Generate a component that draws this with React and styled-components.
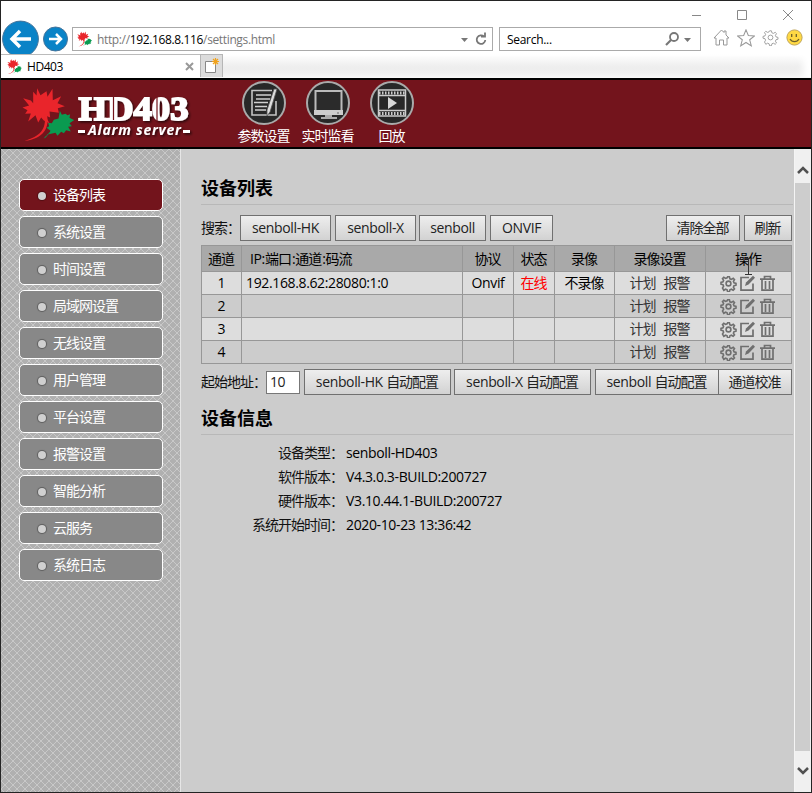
import React from "react";
import styled, { createGlobalStyle } from "styled-components";

const Global = createGlobalStyle`
  * { box-sizing: border-box; }
  html, body { margin: 0; padding: 0; }
  body { overflow: hidden; font: 14px "Open Sans", "Noto Sans CJK SC", sans-serif; color: #111; }
`;

const Window = styled.div`
  width: 812px; height: 793px; display: flex; flex-direction: column;
  border: 1px solid #242424; background: #fff; position: relative;
`;
const TitleBar = styled.div`
  height: 25px; display: flex; justify-content: flex-end; padding-right: 17px;
  svg { display: block; }
`;
const NavRow = styled.div`
  height: 28px; display: flex; align-items: flex-start; padding-top: 1px;
`;
const BackSlot = styled.div`
  width: 39px; height: 34px; margin: -7px 2px 0 0; overflow: hidden;
`;
const ForwardSlot = styled.div`width: 30px; height: 26px; margin-top: -1px; svg { display: block; }`;
const Field = styled.div`
  width: ${p => p.$w}px; height: 24px; margin-left: ${p => p.$ml}px;
  border: 1px solid #aaa; display: flex; align-items: center; padding: 0 3px 0 ${p => p.$pl}px;
  font-size: 12px; color: #000; white-space: nowrap; background: #fff;
  svg { display: block; flex: none; }
`;
const Url = styled.span`
  flex: 1; margin-left: 5px; color: #777; letter-spacing: ${p => p.$ls}px;
  b { font-weight: 400; color: #000; }
`;
const Toolbar = styled.div`
  display: flex; gap: 7px; margin: 2px 0 0 12px; svg { display: block; }
`;
const TabRow = styled.div`
  height: 24px; display: flex; background: linear-gradient(#fff, #eee 55%, #ededed);
  border-bottom: 1px solid #f8f8f8; box-shadow: inset -8px 0 7px #fff;
`;
const Tab = styled.div`
  width: 199px; height: 24px; display: flex; align-items: center; background: #fff;
  border-top: 1px solid #bbb; padding: 0 6px 0 6px; font-size: 12px; color: #000;
  span { flex: 1; margin-left: 5px; letter-spacing: -0.45px; }
`;
const NewTab = styled.div`
  width: 23px; height: 23px; background: #dcdcdc; border: 1px solid #b6b6b6; border-bottom: 0;
  svg { display: block; margin: 1px 0 0 3px; }
`;
const Header = styled.header`
  height: 71px; display: flex; flex: none; border: solid #000; border-width: 2px 0; background: #73141c;
`;
const Brand = styled.div`
  width: 231px; padding: 8px 0 0 20px; display: flex; svg { display: block; }
`;
const HeaderNav = styled.nav`display: flex;`;
const HeaderItem = styled.div`
  width: 64px; display: flex; flex-direction: column; align-items: center; color: #fff;
  svg { display: block; margin-top: 1px; }
`;
const HeaderLabel = styled.div`line-height: 20px; margin-top: 1px;`;
const Body = styled.div`flex: 1; display: flex; min-height: 0; background: #ccc;`;
const Sidebar = styled.aside`
  width: 180px; padding: 30px 0 0 18px; display: flex; flex-direction: column; gap: 5px;
  border-right: 1px solid #e6e6e6;
  background-color: #b0b0b0;
  background-image: linear-gradient(45deg, transparent 44%, #c8c8c8 44% 56%, transparent 56%),
    linear-gradient(-45deg, transparent 44%, #c8c8c8 44% 56%, transparent 56%);
  background-size: 8px 8px;
`;
const MenuItem = styled.div`
  width: 144px; height: 32px; display: flex; align-items: center; padding: 0 0 2px 17px; gap: 6px;
  color: #fff; border: 1px solid #fff; border-radius: 5px;
  background: ${p => (p.$active ? "#73141c" : "#888")};
`;
const Dot = styled.i`
  width: 8px; height: 8px; border-radius: 50%; background: #d0d0d0; margin: 3px 1px 0;
  box-shadow: 0 0 0 1px #0003, 0 0 2px #0006;
`;
const Main = styled.main`flex: 1; padding: 26px 1px 0 20px;`;
const Heading = styled.h2`
  margin: ${p => p.$mt ?? 0}px 0 0; height: 30px; border-bottom: 1px solid #b8b8b8; color: #000;
  font: 700 18px/25px "Noto Sans CJK SC", sans-serif;
`;
const Bar = styled.div`
  display: flex; align-items: center; margin-top: ${p => p.$mt}px; height: 26px; white-space: nowrap;
`;
const Caption = styled.span`width: ${p => p.$w}px; margin-top: -2px;`;
const Button = styled.button`
  width: ${p => p.$w}px; height: 26px; margin: 0 0 0 ${p => p.$ml ?? 0}px; padding: 0;
  border: 1px solid #707070; border-radius: 0; background: linear-gradient(#eee, #d2d2d2);
  font: inherit; color: #222; white-space: nowrap; line-height: 24px;
`;
const NumberInput = styled.input`
  width: 34px; height: 23px; border: 1px solid #777; background: #fff; padding: 0 3px 1px; margin: 0;
  font: inherit; letter-spacing: -0.45px; color: #222;
`;
const Table = styled.table`
  width: 591px; margin-top: 4px; table-layout: fixed; border-collapse: collapse;
  td, th { border: 1px solid #979797; padding: 0; text-align: center; font-weight: 400; line-height: 20px; white-space: nowrap; }
  th { height: 26px; background: #a9a9a9; color: #000; }
  td { height: 23px; color: #000; }
  tbody tr:nth-child(odd) { background: #ddd; }
  th:nth-child(2) { text-align: left; padding-left: 8px; }
  td:nth-child(2) { text-align: left; padding-left: 4px; }
`;
const Status = styled.span`color: #f00;`;
const Links = styled.span`display: flex; justify-content: center; gap: 7px; color: #333;`;
const Actions = styled.span`
  display: flex; justify-content: center; gap: 2px; padding: 1px 2px 0 0; svg { display: block; }
`;
const Info = styled.dl`
  margin: 6px 0 0; display: grid; grid-template-columns: 143px 1fr; column-gap: 2px;
  grid-auto-rows: 24px; line-height: 24px;
  dt { text-align: right; white-space: nowrap; } dd { margin: 0; color: #000; }
`;
const Scrollbar = styled.div`
  width: 17px; display: flex; flex-direction: column; background: #f0f0f0; border-left: 1px solid #f4f4f4;
  svg { display: block; flex: none; }
`;
const Thumb = styled.div`height: 568px; background: #cdcdcd; width: 15px;`;
const Pointer = styled.svg`position: absolute; left: 743px; top: 257px; pointer-events: none;`;
const Han = styled.span`letter-spacing: -1px; margin-right: 1px;`;
const Latin = styled.span`letter-spacing: -0.36px;`;

const Mixed = ({ children }) =>
  children.split(/([\u3000-\uffff]+)/).filter(Boolean).map((t, i) =>
    /[\u3000-\uffff]/.test(t) ? <Han key={i}>{t}</Han> : <Latin key={i}>{t}</Latin>);

const Leaves = ({ w = 52, h = 53 }) => (
  <svg width={w} height={h} viewBox="0 0 52 53">
    <g transform="translate(-5.500 -6.500) scale(.3333)">
      <path d="M131 83 137 95 148 92 154 96 162 93 160 104 174 111 160 120 167 129 156 131 164 145 150 141 143 150 135 146 124 158 118 149 98 153 103 143 91 134 99 129 96 119 107 120 113 110 127 106Z" fill="#0a9a50" transform="translate(-1 5)" />
      <path d="M62 20 72 41 90 29 93 46 108 22 109 56 134 44 123 65 145 74 124 80 127 94 99 90 101 108 85 101 99 125 82 117 74 108 65 123 57 101 35 120 43 96 26 97 33 86 18 78 38 72 20 50 43 57 50 65 50 31 60 42Z" fill="#e9252b" />
      <path d="M84 98 91 98C100 138 82 171 24 178 70 164 91 145 84 98Z" fill="#e9252b" />
      <path d="M151 120C118 140 98 152 84 170" stroke="#0a9a50" strokeWidth="3" fill="none" />
    </g>
  </svg>
);

const Logo = () => (
  <svg width="176" height="58" viewBox="0 0 176 58">
    <defs>
      <filter id="sh" x="-10%" y="-10%" width="125%" height="130%">
        <feDropShadow dx="1.5" dy="1.5" stdDeviation=".8" floodColor="#000" floodOpacity=".65" />
      </filter>
    </defs>
    <g transform="translate(1 0)"><Leaves /></g>
    <g filter="url(#sh)" fill="#fff">
      <text x="57.500" y="31.500" fontFamily="Liberation Serif" fontWeight="700" fontSize="34" textLength="110" lengthAdjust="spacingAndGlyphs" stroke="#fff" strokeWidth="1.800">HD403</text>
      <text x="67" y="47" fontFamily="Open Sans" fontWeight="700" fontStyle="italic" fontSize="14" textLength="93" lengthAdjust="spacing">Alarm server</text>
      <path d="M57 42h7v3h-7zM162 42h7v3h-7z" />
    </g>
    <path d="M92.500 8v24M136 8v25" stroke="#73141c" strokeWidth="1.200" />
  </svg>
);

const Badge = ({ children }) => (
  <svg width="44" height="44" viewBox="0 0 44 44">
    <circle cx="22" cy="22" r="21" fill="#282828" stroke="#aaa" strokeWidth="2" />
    {children}
  </svg>
);
const Params = () => (
  <Badge>
    <path d="M34 20v14H10V9.500h20" fill="none" stroke="#c4c4c4" strokeWidth="1.600" />
    <path d="M14 14h15M14 18h14M12 21.500h14M13 25.500h12M13 29h11" stroke="#d0d0d0" strokeWidth="1.600" />
    <path d="M35 8 28 31 25 35V29L32 8Z" fill="#ddd" stroke="#555" strokeWidth=".8" />
  </Badge>
);
const Monitor = () => (
  <Badge>
    <path d="M9.500 10h26v20h-26z" fill="#2b2b2b" stroke="#bbb" strokeWidth="2" />
    <path d="M8 29h29v5H8z" fill="#ccc" /><path d="M19 34h7v2h5v2H15v-2h4z" fill="#aaa" />
    <circle cx="32" cy="32" r=".8" fill="#555" />
  </Badge>
);
const Film = () => (
  <Badge>
    <path d="M8.500 9h27v26h-27zM8 14.500h28M8 29.500h28" fill="none" stroke="#ccc" strokeWidth="1.500" />
    <path d="M9 12h26M9 32.500h26" stroke="#ccc" strokeWidth="3" strokeDasharray="1.500 1.500" />
    <path d="M18 16v12l9-6z" fill="#d8d8d8" />
  </Badge>
);

const GEAR = "M7.100 1h1.800l.5 2 1.500.6 1.800-1.100 1.300 1.300-1.100 1.800.6 1.500 2 .5v1.800l-2 .5-.6 1.500 1.100 1.800-1.300 1.300-1.800-1.100-1.500.6-.5 2H7.100l-.5-2-1.500-.6-1.800 1.100L2 12.200l1.100-1.800-.6-1.500-2-.5V6.600l2-.5.6-1.500L2 2.800l1.300-1.300 1.800 1.100 1.500-.6z";
const Gear = ({ s = 17, c = "#6f6f6f", sw = 1.6 }) => (
  <svg width={s} height={s} viewBox="-.5 -.5 17 17" fill="none" stroke={c} strokeWidth={sw}>
    <path d={GEAR} transform="translate(0 .3)" /><circle cx="8" cy="8" r="2.400" />
  </svg>
);
const Edit = () => (
  <svg width="17" height="17" viewBox="0 0 17 17" fill="none" stroke="#6f6f6f" strokeWidth="1.700">
    <path d="M10 2.500H2v12.700h12V8.500" /><path d="m6 11 1-3.500L14 .800l2 1.900-6.500 6.900z" fill="#6f6f6f" stroke="none" />
  </svg>
);
const Trash = () => (
  <svg width="18" height="17" viewBox="-1 0 18 17" fill="none" stroke="#6f6f6f" strokeWidth="1.700">
    <path d="M1 4.200h15M5.500 4V1.500h6V4M3 4v11.200h11V4M6.500 6v8M10.500 6v8" />
  </svg>
);

const menu = ["设备列表", "系统设置", "时间设置", "局域网设置", "无线设置", "用户管理", "平台设置", "报警设置", "智能分析", "云服务", "系统日志"];
const columns = [["通道", 40], ["IP:端口:通道:码流", 221], ["协议", 51], ["状态", 41], ["录像", 60], ["录像设置", 91], ["操作", 86]];
const rows = [
  { ip: "192.168.8.62:28080:1:0", proto: "Onvif", status: "在线", rec: "不录像" },
  {}, {}, {},
];
const info = [["设备类型：", "senboll-HD403"], ["软件版本：", "V4.3.0.3-BUILD:200727"], ["硬件版本：", "V3.10.44.1-BUILD:200727"], ["系统开始时间：", "2020-10-23 13:36:42"]];

export default function App() {
  return (
    <>
      <Global />
      <Window>
        <TitleBar>
          <svg width="102" height="25" fill="none" stroke="#888">
            <path d="M0 14.500h9M45.500 9.500h9v9h-9zM91 9l10 10M101 9 91 19" />
          </svg>
        </TitleBar>
        <NavRow>
          <BackSlot>
            <svg width="39" height="39"><circle cx="19.500" cy="19" r="17.900" fill="#0a83c7" stroke="#46749a" /><path d="M30 19H12m7-8-8 8 8 8" fill="none" stroke="#fff" strokeWidth="3.500" /></svg>
          </BackSlot>
          <ForwardSlot>
            <svg width="26" height="26"><circle cx="13.500" cy="13" r="12" fill="#0a83c7" stroke="#46749a" /><path d="M7 13h12m-5-5 5 5-5 5" fill="none" stroke="#fff" strokeWidth="2.500" /></svg>
          </ForwardSlot>
          <Field $w={421} $ml={0} $pl={4}>
            <Leaves w={15} h={16} />
            <Url $ls={-0.36}>http://<b>192.168.8.116</b>/settings.html</Url>
            <svg width="33" height="20"><path d="M5 9h7l-3.500 4z" fill="#777" /><path d="M28 7.500A4.300 4.300 0 1 0 29.300 11M25 7.500h4V3.500" fill="none" stroke="#777" strokeWidth="1.800" /></svg>
          </Field>
          <Field $w={202} $ml={6} $pl={2}>
            <Url $ls={-0.3}><b>Search...</b></Url>
            <svg width="32" height="20"><circle cx="9" cy="8" r="4" fill="none" stroke="#777" strokeWidth="1.800" /><path d="m6 11-5 5" stroke="#777" strokeWidth="2.200" /><path d="M19 9h7l-3.500 4z" fill="#777" /></svg>
          </Field>
          <Toolbar>
            <svg width="17" height="17" fill="none" stroke="#999"><path d="M1 9 8.500 1 11 3.500V2h2v4l3 3H14v7h-3.500v-5h-4v5H3V9z" /></svg>
            <svg width="18" height="18" viewBox="0 0 17 17" fill="none" stroke="#999"><path d="m8.500.8 2.200 5.400 5.800.3-4.500 3.700 1.500 5.700-5-3.200-5 3.200L5 10.200.5 6.500l5.800-.3z" /></svg>
            <Gear c="#999" sw={0.9} />
            <svg width="17" height="17"><circle cx="8.500" cy="8.500" r="7.600" fill="#ffd944" stroke="#bfa55a" /><path d="M5.700 5v3M10.300 5v3M4 10c2 3.500 7 3.500 9 0" stroke="#6d602b" strokeWidth="1.300" fill="none" /></svg>
          </Toolbar>
        </NavRow>
        <TabRow>
          <Tab>
            <Leaves w={15} h={15} /><span>HD403</span>
            <svg width="9" height="9" stroke="#999" strokeWidth="2"><path d="m1 1 7 7M8 1 1 8" /></svg>
          </Tab>
          <NewTab>
            <svg width="17" height="19"><path d="M1.500 5.500h10v11h-10z" fill="#fff" stroke="#888" /><path d="M11.500 2v7M8 5.500h7M9 3l5 5M14 3 9 8" stroke="#f0a21c" strokeWidth="1.200" /></svg>
          </NewTab>
        </TabRow>
        <Header>
          <Brand><Logo /></Brand>
          <HeaderNav>
            <HeaderItem><Params /><HeaderLabel><Mixed>参数设置</Mixed></HeaderLabel></HeaderItem>
            <HeaderItem><Monitor /><HeaderLabel><Mixed>实时监看</Mixed></HeaderLabel></HeaderItem>
            <HeaderItem><Film /><HeaderLabel><Mixed>回放</Mixed></HeaderLabel></HeaderItem>
          </HeaderNav>
        </Header>
        <Body>
          <Sidebar>
            {menu.map((m, i) => <MenuItem key={m} $active={i === 0}><Dot /><Mixed>{m}</Mixed></MenuItem>)}
          </Sidebar>
          <Main>
            <Heading>设备列表</Heading>
            <Bar $mt={10}>
              <Caption $w={39}><Mixed>搜索：</Mixed></Caption>
              <Button $w={91}><Mixed>senboll-HK</Mixed></Button>
              <Button $w={81} $ml={4}><Mixed>senboll-X</Mixed></Button>
              <Button $w={67} $ml={3}><Mixed>senboll</Mixed></Button>
              <Button $w={63} $ml={4}><Mixed>ONVIF</Mixed></Button>
              <Button $w={74} $ml={113}><Mixed>清除全部</Mixed></Button>
              <Button $w={48} $ml={4}><Mixed>刷新</Mixed></Button>
            </Bar>
            <Table>
              <colgroup>{columns.map(([n, w]) => <col key={n} width={w} />)}</colgroup>
              <thead><tr>{columns.map(([n]) => <th key={n}><Mixed>{n}</Mixed></th>)}</tr></thead>
              <tbody>
                {rows.map((r, i) => (
                  <tr key={i}>
                    <td>{i + 1}</td>
                    <td>{r.ip && <Mixed>{r.ip}</Mixed>}</td>
                    <td>{r.proto && <Mixed>{r.proto}</Mixed>}</td>
                    <td>{r.status && <Status><Mixed>{r.status}</Mixed></Status>}</td>
                    <td>{r.rec && <Mixed>{r.rec}</Mixed>}</td>
                    <td><Links><span><Mixed>计划</Mixed></span><span><Mixed>报警</Mixed></span></Links></td>
                    <td><Actions><Gear /><Edit /><Trash /></Actions></td>
                  </tr>
                ))}
              </tbody>
            </Table>
            <Bar $mt={5}>
              <Caption $w={65}><Mixed>起始地址：</Mixed></Caption>
              <NumberInput defaultValue="10" />
              <Button $w={147} $ml={4}><Mixed>senboll-HK 自动配置</Mixed></Button>
              <Button $w={137} $ml={3}><Mixed>senboll-X 自动配置</Mixed></Button>
              <Button $w={124} $ml={4}><Mixed>senboll 自动配置</Mixed></Button>
              <Button $w={74} $ml={-1}><Mixed>通道校准</Mixed></Button>
            </Bar>
            <Heading $mt={10}>设备信息</Heading>
            <Info>{info.map(([k, v]) => <React.Fragment key={k}><dt><Mixed>{k}</Mixed></dt><dd><Mixed>{v}</Mixed></dd></React.Fragment>)}</Info>
          </Main>
          <Scrollbar>
            <svg width="15" height="34"><path d="m3 24 5-5 5 5" fill="none" stroke="#505050" strokeWidth="2.500" /></svg>
            <Thumb />
            <svg width="15" height="41"><path d="m3 17 5 5 5-5" fill="none" stroke="#505050" strokeWidth="2.500" /></svg>
          </Scrollbar>
        </Body>
        <Pointer width="9" height="17"><path d="M1 16.500h7M1 .5h7M4.500 1v15" stroke="#333" fill="none" /></Pointer>
      </Window>
    </>
  );
}
